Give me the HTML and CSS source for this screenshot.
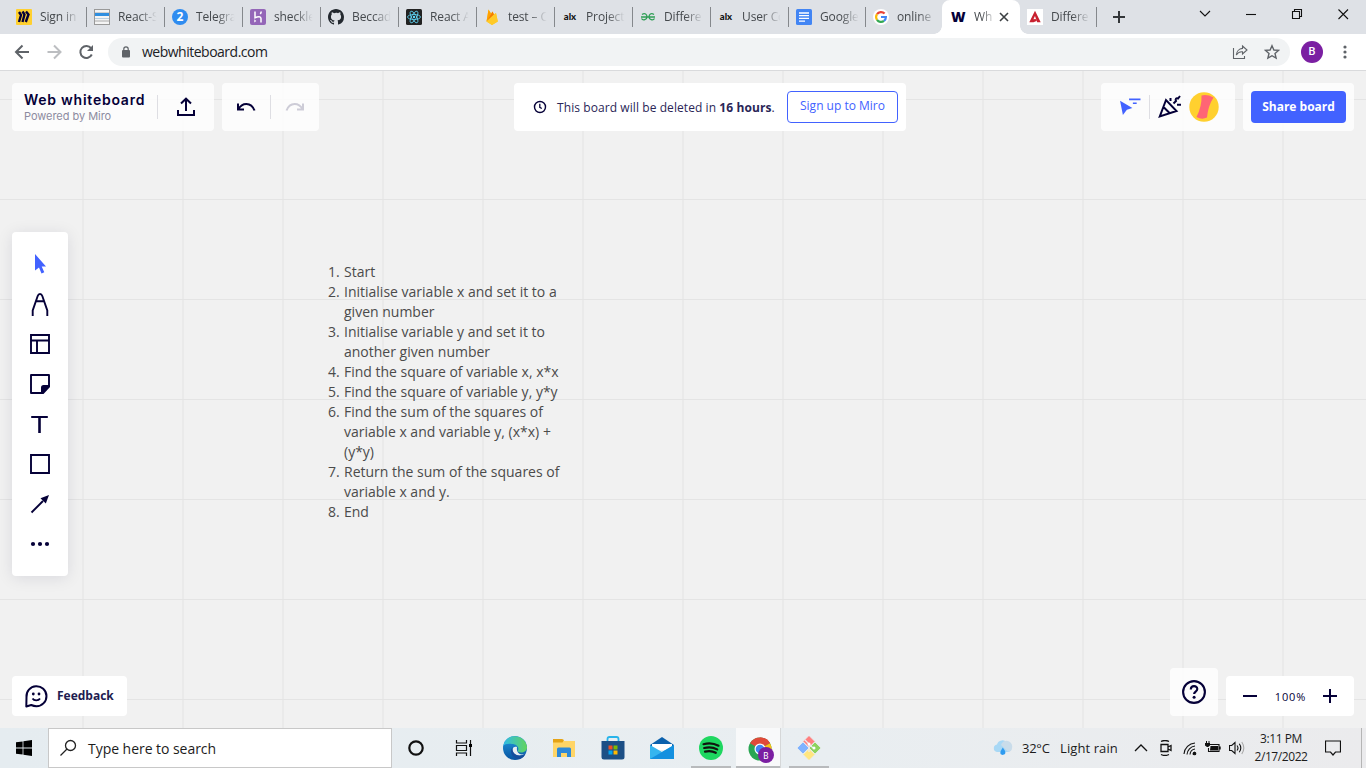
FILE: index.html
```html
<!DOCTYPE html>
<html lang="en">
<head>
<meta charset="utf-8">
<title>Web whiteboard</title>
<link rel="stylesheet" href="styles.css">
</head>
<body>
<header class="tabstrip">
  <div class="tab"><svg class="fav" viewBox="0 0 16 16"><rect width="16" height="16" rx="1" fill="#ffd02f"/><path d="M3 3l2 3-2 7M6.500 2.500l2 3-2 7.500M10 2.500l2.500 3L9.800 13" fill="none" stroke="#050038" stroke-width="2.400"/></svg><span class="label">Sign in</span></div>
  <div class="tab"><svg class="fav" viewBox="0 0 16 16"><rect x=".5" y=".5" width="15" height="15" fill="#f4f4f4" stroke="#999"/><path d="M1 4h14M1 12h14" stroke="#aaa"/><rect x="1" y="4" width="14" height="3" fill="#2f8fe0"/><path d="M1 9.500h14" stroke="#b8cfe0"/></svg><span class="label">React-S</span></div>
  <div class="tab"><span class="fav badge-two">2</span><span class="label">Telegra</span></div>
  <div class="tab"><svg class="fav" viewBox="0 0 16 16"><rect width="16" height="16" rx="2" fill="#9466b8"/><path d="M5 2.500v6.200c3-1.200 6-1.400 6 .8v4M11.200 2.500c0 1-.3 1.600-.9 2.500" fill="none" stroke="#fff" stroke-width="1.500"/><path d="M4.300 10.300l2 1.600-2 1.700z" fill="#fff"/></svg><span class="label">sheckle</span></div>
  <div class="tab"><svg class="fav" viewBox="0 0 16 16"><path fill="#24292f" d="M8 0C3.580 0 0 3.580 0 8c0 3.540 2.290 6.530 5.470 7.590.4.070.55-.17.55-.38v-1.490c-2.010.37-2.530-.49-2.690-.94-.09-.23-.48-.94-.82-1.130-.28-.15-.68-.52-.01-.53.63-.01 1.080.58 1.230.82.72 1.210 1.870.87 2.330.66.070-.52.28-.87.51-1.070-1.780-.2-3.640-.89-3.640-3.950 0-.87.31-1.590.82-2.150-.08-.2-.36-1.020.08-2.120 0 0 .67-.21 2.200.82A7.600 7.600 0 018 3.860c.68 0 1.360.09 2 .27 1.530-1.040 2.200-.82 2.200-.82.44 1.100.16 1.920.08 2.120.51.56.82 1.270.82 2.150 0 3.070-1.870 3.750-3.650 3.950.29.25.54.73.54 1.480v2.200c0 .21.15.46.55.38A8 8 0 0016 8c0-4.420-3.580-8-8-8z"/></svg><span class="label">Beccad</span></div>
  <div class="tab"><svg class="fav" viewBox="0 0 16 16"><rect width="16" height="16" rx="1.500" fill="#222"/><g fill="none" stroke="#61dafb" stroke-width=".8"><ellipse cx="8" cy="8" rx="6.500" ry="2.500"/><ellipse cx="8" cy="8" rx="6.500" ry="2.500" transform="rotate(60 8 8)"/><ellipse cx="8" cy="8" rx="6.500" ry="2.500" transform="rotate(120 8 8)"/></g><circle cx="8" cy="8" r="1.200" fill="#61dafb"/></svg><span class="label">React A</span></div>
  <div class="tab"><svg class="fav" viewBox="0 0 16 16"><path d="M2.500 12.500L4.500.5l2.500 4 1.500-2 1.500 3L12 4l1.800 8.500L8 16z" fill="#ffca28"/><path d="M2.500 12.500L4.500.5l2.500 4L5 9z" fill="#ffa000"/><path d="M2.500 12.500L8.500 2.500l1.500 3z" fill="#f57c00"/><path d="M2.500 12.500L12 4l1.800 8.500L8 16z" fill="#ffca28"/></svg><span class="label">test – C</span></div>
  <div class="tab"><span class="fav alx">alx</span><span class="label">Project</span></div>
  <div class="tab"><svg class="fav" viewBox="0 0 16 16"><g fill="none" stroke="#2f9e55" stroke-width="1.300"><path d="M2 5.500c3-2 5 0 5 2.500s-4 4-5.500 1.500M14 5.500c-3-2-5 0-5 2.500s4 4 5.500 1.500M1 8h14"/></g></svg><span class="label">Differe</span></div>
  <div class="tab"><span class="fav alx">alx</span><span class="label">User Co</span></div>
  <div class="tab tab-docs"><svg class="fav" viewBox="0 0 16 16"><rect width="16" height="16" rx="1.500" fill="#4285f4"/><path d="M3 4h10M3 6.700h10M3 9.400h10M3 12.100h6" stroke="#fff" stroke-width="1.300"/></svg><span class="label">Google</span></div>
  <div class="tab tab-online"><svg class="fav" viewBox="0 0 16 16"><circle cx="8" cy="8" r="8" fill="#fff"/><g fill="none" stroke-width="2.200"><path d="M4 5.200A4.900 4.900 0 0111.600 4.600" stroke="#ea4335"/><path d="M4 5.200a5 5 0 000 5.600" stroke="#fbbc05"/><path d="M4 10.800a4.900 4.900 0 007 1.100" stroke="#34a853"/><path d="M11 11.900A4.900 4.900 0 0012.900 8H8" stroke="#4285f4"/></g></svg><span class="label">online</span></div>
  <div class="tab tab-active"><span class="fav w-mark">W</span><span class="label">Wh</span><svg class="tab-x" viewBox="0 0 10 10"><path d="M1 1l8 8M9 1L1 9" stroke="#3c4043" stroke-width="1.600"/></svg></div>
  <div class="tab tab-last"><svg class="fav" viewBox="0 0 16 16"><rect width="16" height="16" fill="#fff"/><path d="M8 1.700l5.700 11.600h-3.500L9.300 11 8 7l-1.600 3.200 2.300-.2.800 2-3 1.300H2.300z" fill="#c8202f"/></svg><span class="label">Differe</span></div>
  <svg class="new-tab" viewBox="0 0 12 12"><path d="M6 0v12M0 6h12" stroke="#333639" stroke-width="2"/></svg>
  <div class="win-controls">
    <svg viewBox="0 0 46 34"><path d="M18 11l5 5 5-5" /></svg>
    <svg viewBox="0 0 46 34"><path d="M18 14.500h10" /></svg>
    <svg viewBox="0 0 46 34"><path d="M18.500 11.500h7v7h-7zM20.500 11.500v-2h7v7h-2" /></svg>
    <svg viewBox="0 0 46 34"><path d="M18.500 9.500l9.500 9.500M28 9.500L18.500 19" /></svg>
  </div>
</header>
<nav class="toolbar">
  <svg class="nav-icon" viewBox="0 0 16 16"><path d="M15 8H2.500M8.500 1.500L2 8l6.500 6.500" stroke="#5f6368"/></svg>
  <svg class="nav-icon" viewBox="0 0 16 16"><path d="M1.500 8H14M8 1.500L14.500 8 8 14.500" stroke="#bcbec1"/></svg>
  <svg class="nav-icon" viewBox="0 0 16 16"><path d="M13.800 10.500A6 6 0 1113.100 4.200" stroke="#5f6368"/><path d="M15 1v6H9z" fill="#5f6368" stroke="none"/></svg>
  <div class="omnibox">
    <svg class="lock" viewBox="0 0 8 12"><rect y="4" width="8" height="7.500" rx="1" fill="#5f6368"/><path d="M1.800 4.500V3a2.200 2.200 0 014.400 0v1.500" fill="none" stroke="#5f6368" stroke-width="1.200"/></svg>
    <span class="url">webwhiteboard.com</span>
    <svg class="share" viewBox="0 0 16 16"><path d="M1.500 4v10.500h11V12M10.500 2l4.500 4-4.500 4V7.800C7.500 7.500 5.500 9 4.300 11 4.500 7.500 7 4.700 10.500 4.400z" fill="none" stroke="#5f6368" stroke-width="1.100"/></svg>
    <svg class="star" viewBox="0 0 16 16"><path d="M8 1.700l1.900 4.300 4.600.4-3.500 3.100 1.100 4.600L8 11.700l-4.100 2.400L5 9.500 1.500 6.400l4.600-.4z" fill="none" stroke="#5f6368" stroke-width="1.400"/></svg>
  </div>
  <span class="profile">B</span>
  <svg class="kebab" viewBox="0 0 4 14"><g fill="#5f6368"><circle cx="2" cy="2" r="1.600"/><circle cx="2" cy="7" r="1.600"/><circle cx="2" cy="12" r="1.600"/></g></svg>
</nav>
<main class="board">
  <div class="board-head">
    <section class="panel brand">
      <div class="brand-text"><b>Web whiteboard</b><span>Powered by Miro</span></div>
      <i class="rule"></i>
      <svg class="upload" viewBox="0 0 18 20"><path d="M1 13v5h16v-5M9 14V2M4 6.500L9 1.700l5 4.800" fill="none" stroke="#050038" stroke-width="2"/></svg>
    </section>
    <section class="panel history">
      <svg viewBox="0 0 20 12"><path d="M2 2.500v6h6M2.500 8C6 1.500 15 .5 18.500 9.500" fill="none" stroke="#050038" stroke-width="2"/></svg>
      <i class="rule"></i>
      <svg viewBox="0 0 20 12"><path d="M18 2.500v6h-6M17.500 8C14 1.500 5 .5 1.500 9.500" fill="none" stroke="#cdccd7" stroke-width="2"/></svg>
    </section>
    <section class="panel notice">
      <svg viewBox="0 0 14 14"><circle cx="7" cy="7" r="5.500" fill="none" stroke="#050038" stroke-width="1.400"/><path d="M6.800 3.800v3.500l2 1.200" fill="none" stroke="#050038" stroke-width="1.300"/></svg>
      <span class="notice-text">This board will be deleted in <b>16 hours</b>.</span>
      <span class="signup">Sign up to Miro</span>
    </section>
    <section class="panel collab">
      <svg class="cursor-lines" viewBox="0 0 22 20"><path d="M0 3l13 7.500-5.800 1.800L3 18z" fill="#4262ff"/><path d="M9.500 1.500h12M13.500 5.500h4" stroke="#4262ff" stroke-width="1.700"/></svg>
      <i class="rule"></i>
      <svg class="party" viewBox="0 0 24 24"><g fill="none" stroke="#050038" stroke-width="2"><path d="M8 5L1.800 21.500 18.500 16zM5.500 12l6 6M12.500 3v3M15.500 8.500l2.500-2.500c-1-2 0-3 2-2.500l2-2.500M19 9.800h4"/></g></svg>
      <svg class="avatar" viewBox="0 0 30 30"><circle cx="15" cy="15" r="14.700" fill="#ffd02f"/><path d="M12.500 3.500Q18 2 24.500 5.500Q19 14 18 25.500Q13 28 7.500 25Q13 14 12.500 3.500z" fill="#ff6575"/></svg>
    </section>
    <section class="panel share-panel"><span class="share-btn">Share board</span></section>
  </div>
  <div class="board-body">
    <aside class="tools">
      <svg viewBox="0 0 24 24"><path d="M7 2v16.500l4-3 2.500 6 2.800-1.200-2.600-5.800H18z" fill="#4262ff" stroke="none"/></svg>
      <svg viewBox="0 0 24 24"><path d="M4.700 24v-5.500l5-14.500q.7-2 2.300-2t2.300 2l5 14.500V24M8.300 9.300h7.400"/></svg>
      <svg viewBox="0 0 24 24"><path d="M3 3h18v18H3zM3 8.500h18M9 8.500V21"/></svg>
      <svg viewBox="0 0 24 24"><path d="M3 3h18v11l-7 7H3z" stroke-linejoin="round"/><path d="M13 22v-6.500q0-2.500 2.500-2.500H22v2l-6.500 7z" fill="#050038" stroke="none"/></svg>
      <svg viewBox="0 0 24 24"><path d="M3.200 5h16.600" stroke-width="2"/><path d="M11.500 5v16" stroke-width="2.600"/></svg>
      <svg viewBox="0 0 24 24"><path d="M3 3h18v18H3z"/></svg>
      <svg viewBox="0 0 24 24"><path d="M3.500 20.500L15 9"/><path d="M21 3l-8.500 3.200 5.300 5.300z" fill="#050038" stroke="none"/></svg>
      <svg viewBox="0 0 24 24"><g fill="#050038" stroke="none"><circle cx="5" cy="12" r="2.100"/><circle cx="12" cy="12" r="2.100"/><circle cx="19" cy="12" r="2.100"/></g></svg>
    </aside>
    <ol class="steps">
      <li>Start</li>
      <li>Initialise variable x and set it to a<br>given number</li>
      <li>Initialise variable y and set it to<br>another given number</li>
      <li>Find the square of variable x, x*x</li>
      <li>Find the square of variable y, y*y</li>
      <li>Find the sum of the squares of<br>variable x and variable y, (x*x) +<br>(y*y)</li>
      <li>Return the sum of the squares of<br>variable x and y.</li>
      <li>End</li>
    </ol>
  </div>
  <div class="board-foot">
    <div class="panel feedback"><svg viewBox="0 0 24 24"><path d="M2.300 22.500L2.500 13A10 10 0 1112.500 22.200c-2.500 0-4-.6-5.300-1.200z" fill="none" stroke="#050038" stroke-width="2" stroke-linejoin="round"/><path d="M8.500 14.500c1.500 2.500 6 2.500 7.500 0" fill="none" stroke="#050038" stroke-width="1.800"/><circle cx="9.300" cy="10" r="1.400" fill="#050038"/><circle cx="15" cy="10" r="1.400" fill="#050038"/></svg><b>Feedback</b></div>
    <div class="panel help"><svg viewBox="0 0 24 24"><circle cx="12" cy="12" r="10.900" fill="none" stroke="#050038" stroke-width="2.100"/><path d="M8.800 9.500C8.800 5 15.300 5.200 15.300 9c0 2.500-3.200 2.600-3.200 5" fill="none" stroke="#050038" stroke-width="2.100"/><circle cx="12.100" cy="17.300" r="1.500" fill="#050038"/></svg></div>
    <div class="panel zoom"><svg viewBox="0 0 14 14"><path d="M0 7h14"/></svg><span>100%</span><svg viewBox="0 0 14 14"><path d="M0 7h14M7 0v14"/></svg></div>
  </div>
</main>
<footer class="taskbar">
  <div class="start"><svg viewBox="0 0 16 16"><path d="M0 2.300L6.600 1.400v6.200H0zM7.400 1.300L16 0v7.600H7.400zM0 8.400h6.600v6.200L0 13.700zM7.400 8.400H16V16l-8.600-1.300z"/></svg></div>
  <div class="search"><svg viewBox="0 0 18 18"><circle cx="11.500" cy="6.500" r="5" fill="none" stroke="#222" stroke-width="1.300"/><path d="M8 10L1.500 16.500" stroke="#222" stroke-width="1.300"/></svg><span>Type here to search</span></div>
  <div class="slot"><svg width="16" height="16" viewBox="0 0 16 16"><circle cx="8" cy="8" r="6.700" fill="none" stroke="#111" stroke-width="2.200"/></svg></div>
  <div class="slot slot-view"><svg width="18" height="16" viewBox="0 0 18 16"><path d="M1.500 0v3h10V0M1.500 16v-3h10v3M1.500 5.500h10v5h-10zM15.500 0v16" fill="none" stroke="#111" stroke-width="1.200"/><path d="M14 4h3v3h-3z"/></svg></div>
  <div class="app"><svg width="24" height="24" viewBox="0 0 24 24"><defs><linearGradient id="eg" x1="0" x2="1"><stop stop-color="#2fbbe8"/><stop offset="1" stop-color="#62d45c"/></linearGradient><linearGradient id="eb" x2="0" y2="1"><stop stop-color="#2499e0"/><stop offset="1" stop-color="#0754a0"/></linearGradient></defs><circle cx="12" cy="12" r="12" fill="url(#eb)"/><path d="M.3 10C2-3 22-3 24 11c.3 5-6 7-9.500 4.300C17 12 14 8 9 8 5 7.500 1.500 8 .3 10z" fill="url(#eg)"/><path d="M14 11c-3.500-1.500-5.500 2-4 5 2.500 4.500 9 4 12.300 1.500C18 20 13 17.500 14 11z" fill="#e8eef2"/><path d="M9.500 11c-4 5 0 12 7.500 12 3-1 5-3.500 5.500-5.500-5 4.500-14 2-13-6.500z" fill="#164e9c"/></svg></div>
  <div class="app"><svg width="22" height="20" viewBox="0 0 22 20"><path d="M0 1h9l2 2h11v16H0z" fill="#ffd567"/><path d="M0 1h9l2 1-1.500 2.500H0z" fill="#e5a316"/><path d="M4 19v-8q0-1.500 1.500-1.500h11Q18 9.500 18 11v8h-4v-4H8v4z" fill="#2e89d8"/></svg></div>
  <div class="app"><svg width="24" height="24" viewBox="0 0 24 24"><path d="M6.500 6V3q0-2 2-2h7q2 0 2 2v3" fill="none" stroke="#28b4ea" stroke-width="1.800"/><path d="M.5 5h23v16q0 2.500-2.500 2.500H3Q.5 23.500.5 21z" fill="#1c4f85"/><path fill="#f25022" d="M7.500 9.500h4v4h-4z"/><path fill="#7fba00" d="M12.500 9.500h4v4h-4z"/><path fill="#00a4ef" d="M7.500 14.500h4v4h-4z"/><path fill="#ffb900" d="M12.500 14.500h4v4h-4z"/></svg></div>
  <div class="app"><svg width="24" height="22" viewBox="0 0 24 22"><path d="M0 8L12 0l12 8v4H0z" fill="#0b61ad"/><path d="M2 7h20v6H2z" fill="#fff"/><path d="M0 8l12 7 12-7v14H0z" fill="#35b5ef"/><path d="M0 22L24 8v14z" fill="#1490df"/></svg></div>
  <div class="app open"><svg width="24" height="24" viewBox="0 0 24 24"><circle cx="12" cy="12" r="12" fill="#1ed760"/><path d="M4.500 8.200q8-2.300 15 1.500M5.200 12q7-1.900 13 1.400M6 15.600q6-1.500 10.800 1.200" fill="none" stroke="#10140f" stroke-width="2.200" stroke-linecap="round"/></svg></div>
  <div class="app open current"><svg width="27" height="26" viewBox="0 0 27 26"><circle cx="12" cy="12" r="11.500" fill="#2aa653"/><path d="M12 12L2 6.200A11.500 11.500 0 0122 6.200z" fill="#e04a3a"/><path d="M12 12l10-5.800a11.500 11.500 0 01-10 17.300z" fill="#fbc116"/><path d="M12 .5q7 0 10 5.700H12z" fill="#e04a3a"/><circle cx="12" cy="12" r="5.500" fill="#fff"/><circle cx="12" cy="12" r="4.300" fill="#4285f4"/><circle cx="18" cy="18" r="8" fill="#7b1fa2"/><text x="18" y="21.500" class="chip-letter">B</text></svg></div>
  <div class="app open git"><svg width="24" height="24" viewBox="0 0 24 24"><g stroke="#e9edef" stroke-width=".8"><path d="M12-.5l6 6-6 6-6-6z" fill="#ff8080"/><path d="M6 6l6 6-6 6-6-6z" fill="#80b3ff"/><path d="M18 6l6 6-6 6-6-6z" fill="#8dd35f"/><path d="M12 12.500l6 6-6 6-6-6z" fill="#ffe680"/></g><path d="M8 4l8 8M12 8v8" stroke="#e9edef" stroke-width="1.200"/><circle cx="12" cy="8" r="1.500" fill="#fff"/><circle cx="17" cy="12" r="1.500" fill="#fff"/></svg></div>
  <div class="tray">
    <svg class="weather" viewBox="0 0 20 16"><path d="M4 12a3.800 3.800 0 010-7.500A5.300 5.300 0 0114 3.500 4.500 4.500 0 0115.500 12z" fill="#a8d8f5"/><path d="M8 5a5 5 0 0111 3q0 3.500-4 3.800z" fill="#c9dcea"/><path d="M9.800 7.500q5.400 7-.3 7.500-4.500-.7.300-7.500z" fill="#2f9bf0"/></svg>
    <span class="temp">32°C</span><span class="cond">Light rain</span>
    <svg class="tray-icon caret" viewBox="0 0 16 16"><path d="M2 11l6-6 6 6" stroke-width="1.300"/></svg>
    <svg class="tray-icon cam" viewBox="0 0 16 16"><path d="M3 4.500h7v7H3zM10 7l3-1.500v5L10 9M3 1.500q4-2 8 0M3 14.500q4 2 8 0" stroke-width="1.300"/></svg>
    <svg class="tray-icon wifi" viewBox="0 0 16 16"><path d="M2 14A12 12 0 0113 3M5 14.500A9 9 0 0113 6M8 14.500A6 6 0 0113 9M11 14.500A4 4 0 0113 12"/><circle cx="12.500" cy="13.500" r="1.300" fill="#111"/></svg>
    <svg class="tray-icon battery" viewBox="0 0 16 16"><path d="M4.500 4.500h9.500v7H3.500V8"/><path d="M5.500 6H13v4.500H5zM14 6.500h1.700v3H14zM0 3h5v2.500L3.200 7H2L0 5.500zM1 1h1v2H1zM3.500 1h1v2h-1z" fill="#111" stroke="none"/></svg>
    <svg class="tray-icon sound" viewBox="0 0 16 16"><path d="M.5 5.500h2.200L6 2.500v11l-3.300-3H.5zM8 5.500q2 2.500 0 5M10.300 3.800q3 4.200 0 8.400"/><path d="M12.800 2q4 6 0 12" stroke="#aaa"/></svg>
    <div class="clock"><span>3:11 PM</span><span>2/17/2022</span></div>
    <svg class="tray-icon note" viewBox="0 0 16 16"><path d="M.5 1h15v11h-5l-2.500 3-2.500-3h-5z" stroke-width="1.200"/></svg>
    <i class="edge"></i>
  </div>
</footer>
</body>
</html>
```

FILE: styles.css
```css
* { box-sizing: border-box; }
body { margin: 0; width: 1366px; height: 768px; overflow: hidden; display: flex; flex-direction: column; font-family: "Open Sans", "Noto Sans", sans-serif; color: #050038; }
svg { display: block; flex: none; }

.tabstrip { height: 34px; background: #dee1e6; display: flex; align-items: center; padding-left: 8px; }
.tab { width: 78px; height: 34px; flex: none; display: flex; align-items: center; padding-left: 8px; background: linear-gradient(#85888c, #85888c) 77.5px 7px / 1px 20px no-repeat; }
.tab:not(.tab-active) { border-left: 1px solid transparent; padding-left: 7px; background-origin: border-box; background-position: right 0 top 7px; margin-right: 0; }
.tabstrip .tab:nth-child(-n+10) { width: 79px; margin-right: -1px; }
.tabstrip .tab-online { width: 76px; padding-left: 6px; background: none; }
.tab-active { position: relative; background: #fff; border-radius: 8px 8px 0 0; padding-left: 9px; }
.tab-active::before, .tab-active::after { content: ""; position: absolute; bottom: 0; width: 8px; height: 8px; }
.tab-active::before { left: -8px; background: radial-gradient(circle at 0 0, transparent 7.5px, #fff 8px); }
.tab-active::after { right: -8px; background: radial-gradient(circle at 100% 0, transparent 7.5px, #fff 8px); }
.tabstrip .tab-last { width: 77px; padding-left: 6px; }
.fav { width: 16px; height: 16px; flex: none; display: block; text-align: center; }
.badge-two { border-radius: 50%; background: #2f8cf0; color: #fff; font: bold 12px/16px "Open Sans", sans-serif; }
.alx { font: 900 9.500px/15px Lato, sans-serif; color: #111; }
.w-mark { width: 14px; margin-right: 2px; font: 800 14px/16px "Open Sans", sans-serif; letter-spacing: -1px; text-align: left; }
.label { margin-left: 8px; width: 44px; white-space: nowrap; font-size: 12px; line-height: 18px; letter-spacing: -.12px; color: #45494d; -webkit-mask-image: linear-gradient(90deg, #000 48%, transparent 88%); mask-image: linear-gradient(90deg, #000 48%, transparent 88%); }
.tab-active .label { width: 20px; margin-left: 7px; -webkit-mask-image: linear-gradient(90deg, #000 35%, transparent 110%); mask-image: linear-gradient(90deg, #000 35%, transparent 110%); }
.tab-x { width: 10px; height: 10px; margin-left: 5px; }
.new-tab { width: 12px; height: 12px; margin-left: 16px; }
.win-controls { display: flex; margin-left: auto; }
.win-controls svg { width: 46px; height: 34px; fill: none; stroke: #111; stroke-width: 1.100; }

.toolbar { height: 37px; background: #fff; border-bottom: 1px solid #d9dadc; display: flex; align-items: center; padding-left: 14px; }
.nav-icon { width: 16px; height: 16px; margin-right: 16px; fill: none; stroke-width: 2; }
.omnibox { height: 28px; width: 1182px; margin-left: -2px; border-radius: 14px; background: #f1f3f4; display: flex; align-items: center; padding: 0 10px 0 14px; }
.lock { width: 8px; height: 12px; }
.url { margin-left: 12px; font-size: 14px; line-height: 20px; letter-spacing: -.5px; color: #202124; }
.share { width: 16px; height: 16px; margin-left: auto; }
.star { width: 16px; height: 16px; margin-left: 16px; }
.profile { width: 22px; height: 22px; margin-left: 11px; border-radius: 50%; background: #7b1fa2; color: #fff; font: 500 11px/22px Roboto, sans-serif; text-align: center; }
.kebab { width: 4px; height: 14px; margin-left: 20px; }

.board { height: 657px; padding: 12px; display: flex; flex-direction: column; background-color: #f1f1f1; background-image: linear-gradient(#e4e4e4 1px, transparent 1px), linear-gradient(90deg, #eaeaea 2px, transparent 2px); background-size: 100px 100px; background-position: 0 28px, 82px 0; }
.board-head { height: 48px; display: flex; }
.panel { background: rgba(255,255,255,.8); border-radius: 4px; display: flex; align-items: center; }
.rule { width: 1px; height: 24px; background: #dedee3; flex: none; }
.brand { width: 202px; padding-left: 12px; }
.brand-text { width: 133px; display: flex; flex-direction: column; font-family: Inter, sans-serif; white-space: nowrap; }
.brand-text b { font-size: 14px; line-height: 18px; font-weight: 600; letter-spacing: .75px; }
.brand-text span { font-size: 11px; line-height: 14px; letter-spacing: -.04px; color: #8d8ba0; }
.upload { width: 18px; height: 20px; margin-left: 19px; }
.history { width: 97px; margin-left: 8px; padding-left: 14px; }
.history svg { width: 20px; height: 12px; }
.history .rule { margin: 0 14px; }
.notice { width: 392px; margin-left: 195px; padding-left: 19px; background: #fff; }
.notice svg { width: 14px; height: 14px; }
.notice-text { width: 231px; margin-left: 10px; font-size: 12px; letter-spacing: .08px; white-space: nowrap; color: #2a2657; }
.signup { width: 111px; height: 32px; margin-left: -1px; border: 1px solid #4262ff; border-radius: 4px; color: #4262ff; font-size: 12px; line-height: 28px; text-align: center; white-space: nowrap; }
.collab { width: 134px; margin-left: 195px; padding-left: 19px; }
.cursor-lines { width: 21px; height: 19px; margin-right: 8px; }
.party { width: 24px; height: 24px; margin-left: 8px; }
.avatar { width: 30px; height: 30px; margin-left: 7px; }
.share-panel { width: 111px; margin-left: 8px; padding-left: 8px; }
.share-btn { width: 95px; height: 32px; border-radius: 4px; background: #4262ff; color: #fff; font-weight: 700; font-size: 12px; line-height: 32px; text-align: center; }
.board-body { display: flex; align-items: flex-start; padding-top: 101px; height: 537px; }
.tools { width: 56px; height: 344px; background: #fff; border-radius: 4px; box-shadow: 0 2px 16px rgba(5,0,56,.1); padding: 20px 16px; display: flex; flex-direction: column; gap: 16px; }
.tools svg { width: 24px; height: 24px; fill: none; stroke: #050038; stroke-width: 1.900; }
.steps { margin: 30px 0 0 259px; padding: 0 0 0 17px; width: 260px; list-style: none; counter-reset: s; font-size: 14px; line-height: 20px; color: #4b4b4b; white-space: nowrap; }
.steps li { counter-increment: s; }
.steps li::before { content: counter(s) "."; display: inline-block; width: 16px; margin-left: -16px; }
.board-foot { height: 48px; display: flex; align-items: flex-end; }
.feedback { width: 115px; height: 40px; padding: 0 0 1px 12px; background: #fff; font-size: 12px; color: #211c50; }
.feedback svg { width: 24px; height: 24px; margin-right: 9px; }
.help { width: 48px; height: 48px; margin-left: 1043px; justify-content: center; }
.help svg { width: 24px; height: 24px; }
.zoom { width: 128px; height: 40px; margin-left: 8px; background: #fff; padding: 0 17px; justify-content: space-between; font-size: 11px; letter-spacing: .9px; }
.zoom span { margin-left: 1px; }
.zoom svg { width: 14px; height: 14px; stroke: #050038; stroke-width: 2; }

.taskbar { height: 40px; display: flex; background: linear-gradient(90deg, #e5ecf0, #e9eef1 60%, #ebebed); color: #1c1c1c; }
.start { width: 48px; display: flex; align-items: center; justify-content: center; }
.start svg { width: 16px; height: 16px; }
.search { width: 344px; background: #fff; border: 1px solid #c8c8c8; display: flex; align-items: center; padding-left: 10px; font-size: 14px; }
.search svg { width: 18px; height: 18px; }
.search span { margin-left: 11px; letter-spacing: -.04px; }
.slot { width: 48px; display: flex; align-items: center; justify-content: center; }
.slot-view { margin-right: 2px; }
.app { width: 49px; display: flex; align-items: center; justify-content: center; }
.open { background: linear-gradient(#b8babc, #b8babc) center bottom / 40px 2px no-repeat; }
.current { width: 45px; margin: 0 3px 0 1px; background: linear-gradient(#b8babc, #b8babc) bottom / 100% 2px no-repeat #f8f9fa; border-right: 1px solid #d5d7d8; }
.current svg { margin: 3px 0 0 6px; }
.chip-letter { font: 8.500px Roboto, sans-serif; fill: #fff; text-anchor: middle; }
.tray { margin-left: auto; width: 373px; display: flex; align-items: center; font-size: 13px; white-space: nowrap; }
.weather { width: 20px; height: 16px; }
.temp { width: 38px; margin-left: 9px; letter-spacing: -.25px; }
.cond { width: 73px; letter-spacing: .1px; }
.tray-icon { width: 16px; height: 16px; fill: none; stroke: #111; stroke-width: 1.100; }
.cam { margin-left: 9px; }
.wifi { margin-left: 8px; }
.battery { margin-left: 7px; }
.sound { margin-left: 8px; }
.clock { width: 72px; display: flex; flex-direction: column; align-items: center; font-size: 12px; line-height: 17px; letter-spacing: -.42px; }
.clock span:first-child { position: relative; top: -1px; }
.note { margin-left: 8px; }
.edge { width: 1px; height: 40px; background: #b5b5b5; margin: 0 4px 0 auto; }
```
